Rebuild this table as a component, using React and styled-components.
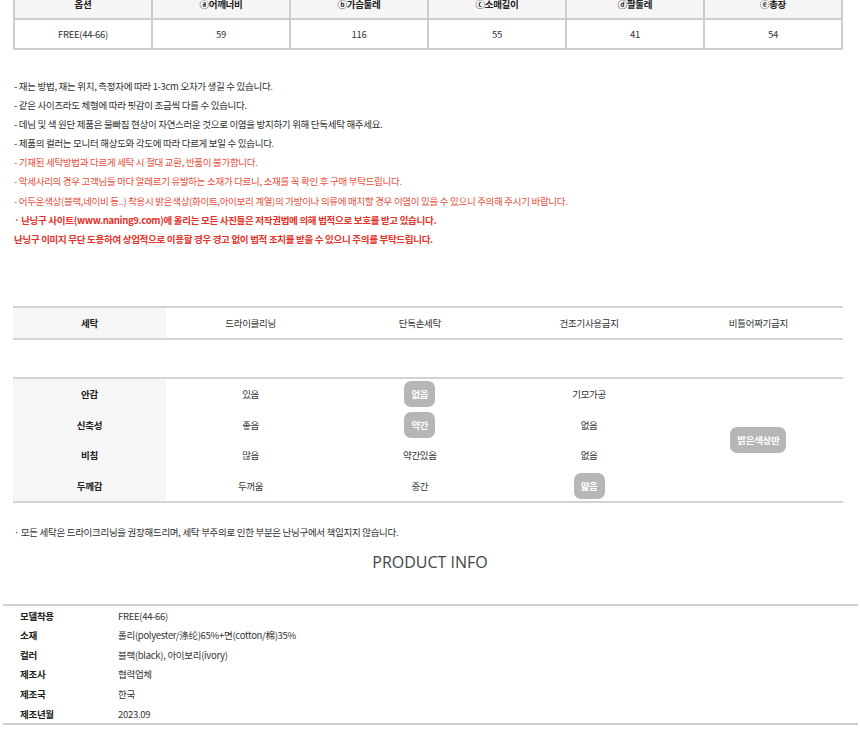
import styled, { createGlobalStyle } from "styled-components";

const GlobalStyle = createGlobalStyle`
  body{
    margin: 0;
    background: #ffffff;
    font-family: "Noto Sans CJK KR", "Noto Sans", sans-serif;
    color: #333333;
  }
`;

const sizeHead = ["옵션", "ⓐ어깨너비", "ⓑ가슴둘레", "ⓒ소매길이", "ⓓ팔둘레", "ⓔ총장"];
const sizeRow = ["FREE(44-66)", "59", "116", "55", "41", "54"];

const notices = [
    { text: "- 재는 방법, 재는 위치, 측정자에 따라 1-3cm 오차가 생길 수 있습니다." },
    { text: "- 같은 사이즈라도 체형에 따라 핏감이 조금씩 다를 수 있습니다." },
    { text: "- 데님 및 색 원단 제품은 물빠짐 현상이 자연스러운 것으로 이염을 방지하기 위해 단독세탁 해주세요." },
    { text: "- 제품의 컬러는 모니터 해상도와 각도에 따라 다르게 보일 수 있습니다." },
    { text: "- 기재된 세탁방법과 다르게 세탁 시 절대 교환, 반품이 불가합니다.", red: true },
    { text: "- 악세사리의 경우 고객님들 마다 알레르기 유발하는 소재가 다르니, 소재를 꼭 확인 후 구매 부탁드립니다.", red: true },
    { text: "- 어두운색상(블랙,네이비 등..) 착용시 밝은색상(화이트,아이보리 계열)의 가방이나 의류에 매치할 경우 이염이 있을 수 있으니 주의해 주시기 바랍니다.", red: true },
    { text: "· 난닝구 사이트(www.naning9.com)에 올리는 모든 사진들은 저작권법에 의해 법적으로 보호를 받고 있습니다.", red: true, bold: true },
    { text: "난닝구 이미지 무단 도용하여 상업적으로 이용할 경우 경고 없이 법적 조치를 받을 수 있으니 주의를 부탁드립니다.", red: true, bold: true },
];

const washItems = ["드라이클리닝", "단독손세탁", "건조기사용금지", "비틀어짜기금지"];

const specRows = [
    { label: "안감", cells: [{ t: "있음" }, { t: "없음", on: true }, { t: "기모가공" }] },
    { label: "신축성", cells: [{ t: "좋음" }, { t: "약간", on: true }, { t: "없음" }] },
    { label: "비침", cells: [{ t: "많음" }, { t: "약간있음" }, { t: "없음" }] },
    { label: "두께감", cells: [{ t: "두꺼움" }, { t: "중간" }, { t: "얇음", on: true }] },
];

const infoRows = [
    ["모델착용", "FREE(44-66)"],
    ["소재", "폴리(polyester/涤纶)65%+면(cotton/棉)35%"],
    ["컬러", "블랙(black), 아이보리(ivory)"],
    ["제조사", "협력업체"],
    ["제조국", "한국"],
    ["제조년월", "2023.09"],
];

export default function App(){
    return(
        <>
            <GlobalStyle/>
            <Page>
                <SizeTable>
                    <SizeHead>
                        {sizeHead.map((h) => <SizeCell key={h} head>{h}</SizeCell>)}
                    </SizeHead>
                    <SizeBody>
                        {sizeRow.map((v, i) => <SizeCell key={i}>{v}</SizeCell>)}
                    </SizeBody>
                </SizeTable>

                <Notices>
                    {notices.map((n, i) => <Notice key={i} red={n.red} bold={n.bold}>{n.text}</Notice>)}
                </Notices>

                <WashTable>
                    <LabelCell>세탁</LabelCell>
                    {washItems.map((w) => <ValueCell key={w}>{w}</ValueCell>)}
                </WashTable>

                <SpecTable>
                    {specRows.map((r) => (
                        <SpecRow key={r.label}>
                            <LabelCell>{r.label}</LabelCell>
                            {r.cells.map((c, ci) => (
                                <ValueCell key={ci}>
                                    {c.on ? <Badge>{c.t}</Badge> : c.t}
                                </ValueCell>
                            ))}
                        </SpecRow>
                    ))}
                    <SpanCell>
                        <Badge>밝은색상만</Badge>
                    </SpanCell>
                </SpecTable>

                <Footnote>· 모든 세탁은 드라이크리닝을 권장해드리며, 세탁 부주의로 인한 부분은 난닝구에서 책임지지 않습니다.</Footnote>

                <Title>PRODUCT INFO</Title>

                <InfoTable>
                    {infoRows.map(([k, v]) => (
                        <InfoRow key={k}>
                            <InfoKey>{k}</InfoKey>
                            <InfoValue>{v}</InfoValue>
                        </InfoRow>
                    ))}
                </InfoTable>
            </Page>
        </>
    )
}

const Page = styled.div`
    width: 860px;
    height: 744px;
    overflow: hidden;
    font-size: 9.5px;
    letter-spacing: -0.3px;
`;

const SizeTable = styled.div`
    margin: -13px 17px 0 13px;
    border-top: 2px solid #cdcdcd;
    border-left: 2px solid #cdcdcd;
`;

const SizeHead = styled.div`
    display: grid;
    grid-template-columns: repeat(6, 1fr);
    height: 31px;
    background-color: #f5f5f5;
`;

const SizeBody = styled.div`
    display: grid;
    grid-template-columns: repeat(6, 1fr);
    height: 30px;
`;

const SizeCell = styled.div`
    display: flex;
    align-items: center;
    justify-content: center;
    border-right: 2px solid #cdcdcd;
    border-bottom: 2px solid #cdcdcd;
    font-weight: ${(p) => (p.head ? 700 : 400)};
    color: ${(p) => (p.head ? "#222" : "#333")};
`;

const Notices = styled.div`
    margin: 27px 0 0 14px;
`;

const Notice = styled.p`
    margin: 0;
    height: 19.1px;
    line-height: 19.1px;
    white-space: nowrap;
    color: ${(p) => (p.bold ? "#e3322a" : p.red ? "#e84d3a" : "#2e2e2e")};
    font-weight: ${(p) => (p.bold ? 700 : 400)};
`;

const WashTable = styled.div`
    margin: 57px 17px 0 13px;
    display: grid;
    grid-template-columns: 153px repeat(4, 1fr);
    height: 30px;
    border-top: 2px solid #d3d3d3;
    border-bottom: 2px solid #d3d3d3;
`;

const LabelCell = styled.div`
    display: flex;
    align-items: center;
    justify-content: center;
    background-color: #f6f6f6;
    font-weight: 700;
    color: #222;
`;

const ValueCell = styled.div`
    display: flex;
    align-items: center;
    justify-content: center;
    color: #333;
`;

const SpecTable = styled.div`
    margin: 37px 17px 0 13px;
    display: grid;
    grid-template-columns: 153px repeat(4, 1fr);
    grid-template-rows: repeat(4, 30.5px);
    border-top: 2px solid #d3d3d3;
    border-bottom: 2px solid #d3d3d3;
`;

const SpecRow = styled.div`
    display: contents;
`;

const SpanCell = styled.div`
    grid-column: 5;
    grid-row: 1 / span 4;
    display: flex;
    align-items: center;
    justify-content: center;
`;

const Badge = styled.span`
    display: inline-flex;
    align-items: center;
    justify-content: center;
    height: 26px;
    padding: 0 7px;
    border-radius: 7px;
    background-color: #b6b6b6;
    color: #ffffff;
    font-weight: 700;
`;

const Footnote = styled.p`
    margin: 20px 0 0 14px;
    line-height: 19px;
    color: #2e2e2e;
    white-space: nowrap;
`;

const Title = styled.h2`
    margin: 9px 0 0;
    text-align: center;
    font-family: "Open Sans", "Noto Sans", sans-serif;
    font-weight: 400;
    font-size: 16px;
    letter-spacing: 0;
    line-height: 22px;
    color: #444;
`;

const InfoTable = styled.div`
    margin: 31px 2px 0 3px;
    border-top: 2px solid #d0d0d0;
    border-bottom: 2px solid #d0d0d0;
`;

const InfoRow = styled.div`
    display: grid;
    grid-template-columns: 98px 1fr;
    padding-left: 17px;
    height: 19.6px;
    align-items: center;
`;

const InfoKey = styled.div`
    font-weight: 700;
    color: #222;
`;

const InfoValue = styled.div`
    color: #333;
`;
